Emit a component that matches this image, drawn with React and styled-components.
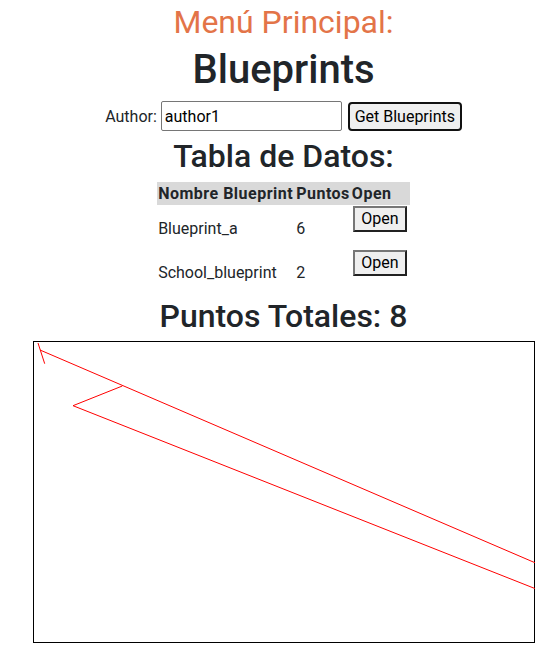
import React from "react";
import styled, { createGlobalStyle } from "styled-components";

const GlobalStyle = createGlobalStyle`
  body {
    margin: 0;
    font-family: Roboto, "Noto Sans", sans-serif;
    color: #212529;
    background: #fff;
  }
`;

const blueprints = [
  { name: "Blueprint_a", points: 6 },
  { name: "School_blueprint", points: 2 },
];

export default function App() {
  const total = blueprints.reduce((acc, bp) => acc + bp.points, 0);
  return (
    <Page>
      <GlobalStyle />
      <Heading $color="#e37448" $top={3}>Menú Principal:</Heading>
      <Title>Blueprints</Title>
      <AuthorRow>
        <label htmlFor="author">Author:</label>
        <AuthorInput id="author" defaultValue="author1" />
        <GetButton>Get Blueprints</GetButton>
      </AuthorRow>
      <Heading $top={5.5} $bottom={7} $weight={500}>Tabla de Datos:</Heading>
      <Table>
        <thead>
          <tr>
            <th style={{ width: 136 }}>Nombre Blueprint</th>
            <th style={{ width: 52 }}>Puntos</th>
            <th style={{ width: 57 }}>Open</th>
          </tr>
        </thead>
        <tbody>
          {blueprints.map(bp => (
            <tr key={bp.name}>
              <TextCell>{bp.name}</TextCell>
              <TextCell>{bp.points}</TextCell>
              <td>
                <OpenButton>Open</OpenButton>
              </td>
            </tr>
          ))}
        </tbody>
      </Table>
      <Heading $top={3.5} $bottom={6} $weight={500}>Puntos Totales: {total}</Heading>
      <Canvas width="502" height="302" viewBox="-1 -1 502 302">
        <rect x="-0.5" y="-0.5" width="501" height="301" fill="#fff" stroke="#000" />
        <g stroke="#ff0000" strokeWidth="1" fill="none">
          <line x1="4" y1="1" x2="10.7" y2="21.7" />
          <line x1="6" y1="8" x2="540" y2="237.5" />
          <polyline points="88.3,44 39,63.7 540,262" />
        </g>
      </Canvas>
    </Page>
  );
}

const Page = styled.div`
  padding-left: 16px;
  text-align: center;
`;

const Heading = styled.h2`
  margin: ${p => p.$top}px 0 ${p => (p.$bottom ?? 0)}px;
  font-size: 32px;
  font-weight: ${p => p.$weight || 400};
  line-height: 38.4px;
  color: ${p => p.$color || "#212529"};
`;

const Title = styled.h1`
  margin: 4.3px 0 7.4px;
  font-size: 40px;
  font-weight: 500;
  line-height: 48px;
`;

const AuthorRow = styled.div`
  display: flex;
  justify-content: center;
  align-items: center;
  height: 30px;
  font-size: 16px;

  label {
    margin-right: 4px;
  }
`;

const AuthorInput = styled.input`
  box-sizing: border-box;
  width: 181px;
  height: 30px;
  padding: 1px 3px;
  border: 1px solid #767676;
  border-radius: 2px;
  font: inherit;
  color: #000;
`;

const GetButton = styled.button`
  box-sizing: border-box;
  margin-left: 6px;
  width: 114px;
  height: 29px;
  padding: 0;
  border: 2px solid #111;
  border-radius: 4px;
  background: #efefef;
  font: inherit;
  color: #000;
`;

const Table = styled.table`
  margin: 0 auto;
  border-collapse: collapse;
  table-layout: fixed;
  text-align: left;
  font-size: 16px;

  th {
    padding: 1px;
    height: 21px;
    line-height: 21px;
    background: #d9d9d9;
    font-weight: 700;
    letter-spacing: 0.5px;
    white-space: nowrap;
  }

  td {
    padding: 1px;
    vertical-align: middle;
  }
`;

const TextCell = styled.td`
  && {
    padding-top: 5px;
  }
  line-height: 24px;
  white-space: nowrap;
`;

const OpenButton = styled.button`
  box-sizing: border-box;
  display: block;
  margin: 0 0 16px 1px;
  width: 54px;
  height: 26px;
  padding: 0;
  border: 2px outset #767676;
  background: #efefef;
  font: inherit;
  color: #000;
  line-height: 20px;
`;

const Canvas = styled.svg`
  display: block;
  margin: 0 auto;
`;
